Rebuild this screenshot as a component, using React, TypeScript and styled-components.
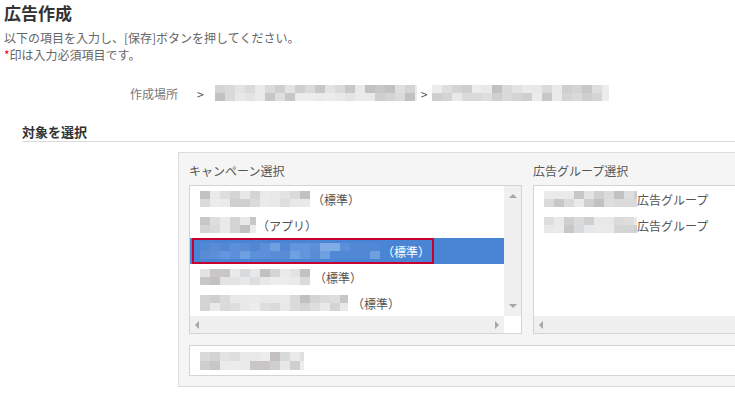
import * as React from 'react';
import styled, { createGlobalStyle } from 'styled-components';

const GlobalStyle = createGlobalStyle`
  html, body {
    margin: 0;
    padding: 0;
    overflow: hidden;
    background: #fff;
  }
  body {
    font-family: "Noto Sans CJK JP", "Noto Sans", "Liberation Sans", sans-serif;
    font-size: 12px;
    color: #555;
  }
`;

const GRAYS = ['#e9e9e9', '#dedede', '#d4d4d4', '#eaeaea', '#e3e3e3', '#cfcfcf', '#ececec', '#dadada', '#c9c6c6', '#e6e8ea', '#c2c0c0', '#d8dadc'];
const BLUES = ['#5b8fd9', '#6396dc', '#5287d4', '#6e9fe0', '#5088d5', '#80abe6', '#6196dc', '#5a8cd6'];

const mosaic = (width: number, seed: number, palette: string[]) => {
  let s = seed * 9301 + 49297;
  const next = () => {
    s = (s * 9301 + 49297) % 233280;
    return palette[Math.floor((s / 233280) * palette.length)];
  };
  const row = () => {
    const stops: string[] = [];
    for (let x = 0; x < width; x += 10) {
      const c = next();
      stops.push(`${c} ${x}px ${Math.min(x + 10, width)}px`);
    }
    return `linear-gradient(to right, ${stops.join(', ')})`;
  };
  return `${row()} top / 100% 50% no-repeat, ${row()} bottom / 100% 50% no-repeat`;
};

const Page = styled.div`
  padding: 1px 0 0 4px;
  width: 1000px;
`;

const Title = styled.h1`
  margin: 0;
  font-size: 17px;
  line-height: 24px;
  font-weight: bold;
  color: #333;
`;

const Note = styled.p<{ $first?: boolean }>`
  margin: ${({ $first }) => ($first ? '4px' : '0')} 0 0;
  line-height: 17px;
  color: #666;
`;

const Req = styled.span`
  color: #e60012;
`;

const Breadcrumb = styled.div`
  margin: 20px 0 0 126px;
  height: 20px;
  display: flex;
  align-items: center;
  color: #777;
`;

const CrumbLabel = styled.span`
  margin-right: 19px;
`;

const Sep = styled.span<{ $tight?: boolean }>`
  margin: 0 ${({ $tight }) => ($tight ? '5px' : '11px')} 0 ${({ $tight }) => ($tight ? '4px' : '0')};
  color: #555;
`;

const Mosaic = styled.span<{ $w: number; $h: number }>`
  display: inline-block;
  flex: none;
  width: ${({ $w }) => $w}px;
  height: ${({ $h }) => $h}px;
`;

const SectionHead = styled.h2`
  margin: 20px 0 0 18px;
  font-size: 13px;
  line-height: 18px;
  font-weight: bold;
  color: #333;
  border-bottom: 1px solid #d9d9d9;
`;

const Panel = styled.section`
  margin: 10px 0 0 174px;
  width: 700px;
  padding: 8px 0 10px 10px;
  background: #f5f5f5;
  border: 1px solid #dcdcdc;
`;

const Columns = styled.div`
  display: flex;
  gap: 11px;
`;

const Column = styled.div<{ $w: number }>`
  width: ${({ $w }) => $w}px;
  flex: none;
`;

const ColLabel = styled.div`
  line-height: 20px;
  margin-bottom: 4px;
  color: #555;
`;

const ListBox = styled.div<{ $vscroll?: boolean }>`
  display: grid;
  grid-template-columns: 1fr ${({ $vscroll }) => ($vscroll ? '17px' : '')};
  grid-template-rows: 130px 17px;
  background: #fff;
  border: 1px solid #d4d4d4;
`;

const Rows = styled.div`
  overflow: hidden;
`;

const Row = styled.div<{ $selected?: boolean }>`
  height: 26px;
  padding-left: 2px;
  display: flex;
  align-items: stretch;
  background: ${({ $selected }) => ($selected ? '#4a85d5' : 'transparent')};
  color: ${({ $selected }) => ($selected ? '#fff' : '#555')};
  white-space: nowrap;
`;

const Item = styled.span<{ $focus?: boolean }>`
  display: inline-flex;
  align-items: center;
  padding: 0 2px 0 6px;
  border: 2px solid ${({ $focus }) => ($focus ? '#c8002f' : 'transparent')};
`;

const Suffix = styled.span<{ $gap?: number }>`
  margin-left: ${({ $gap }) => $gap ?? 2}px;
`;

const VScroll = styled.div`
  background: #f0f0f0;
  display: flex;
  flex-direction: column;
  justify-content: space-between;
  align-items: center;
  padding: 8px 0;
`;

const HScroll = styled.div`
  background: #f0f0f0;
  display: flex;
  justify-content: space-between;
  align-items: center;
  padding: 0 5px 0 5px;
`;

const Corner = styled.div`
  background: #fff;
`;

const Arrow = styled.span<{ $dir: 'up' | 'down' | 'left' | 'right' }>`
  width: 0;
  height: 0;
  border-style: solid;
  border-color: transparent;
  ${({ $dir }) =>
    $dir === 'up'
      ? 'border-width: 0 4px 4px 4px; border-bottom-color: #a6a6a6;'
      : $dir === 'down'
      ? 'border-width: 4px 4px 0 4px; border-top-color: #a6a6a6;'
      : $dir === 'left'
      ? 'border-width: 4px 4px 4px 0; border-right-color: #a6a6a6;'
      : 'border-width: 4px 0 4px 4px; border-left-color: #a6a6a6;'}
`;

const InputBox = styled.div`
  margin-top: 11px;
  height: 29px;
  background: #fff;
  border: 1px solid #d4d4d4;
  display: flex;
  align-items: center;
  padding-left: 10px;
`;

type Campaign = { w: number; suffix: string; gap?: number; selected?: boolean };

const campaigns: Campaign[] = [
  { w: 110, suffix: '（標準）' },
  { w: 56, suffix: '（アプリ）', gap: 1 },
  { w: 180, suffix: '（標準）', selected: true },
  { w: 110, suffix: '（標準）', gap: 4 },
  { w: 148, suffix: '（標準）', gap: 4 },
];

const groups = [{ w: 93 }, { w: 93 }];

const App = () => (
  <>
    <GlobalStyle />
    <Page>
      <Title>広告作成</Title>
      <Note $first>以下の項目を入力し、[保存]ボタンを押してください。</Note>
      <Note>
        <Req>*</Req>印は入力必須項目です。
      </Note>

      <Breadcrumb>
        <CrumbLabel>作成場所</CrumbLabel>
        <Sep>&gt;</Sep>
        <Mosaic $w={202} $h={16} style={{ background: mosaic(202, 3, GRAYS) }} />
        <Sep $tight>&gt;</Sep>
        <Mosaic $w={177} $h={16} style={{ background: mosaic(177, 7, GRAYS) }} />
      </Breadcrumb>

      <SectionHead>対象を選択</SectionHead>

      <Panel>
        <Columns>
          <Column $w={333}>
            <ColLabel>キャンペーン選択</ColLabel>
            <ListBox $vscroll>
              <Rows>
                {campaigns.map((c, i) => (
                  <Row key={i} $selected={c.selected}>
                    <Item $focus={c.selected}>
                      <Mosaic
                        $w={c.w}
                        $h={16}
                        style={{ background: mosaic(c.w, i + 11, c.selected ? BLUES : GRAYS) }}
                      />
                      <Suffix $gap={c.gap}>{c.suffix}</Suffix>
                    </Item>
                  </Row>
                ))}
              </Rows>
              <VScroll>
                <Arrow $dir="up" />
                <Arrow $dir="down" />
              </VScroll>
              <HScroll>
                <Arrow $dir="left" />
                <Arrow $dir="right" />
              </HScroll>
              <Corner />
            </ListBox>
          </Column>

          <Column $w={330}>
            <ColLabel>広告グループ選択</ColLabel>
            <ListBox>
              <Rows>
                {groups.map((g, i) => (
                  <Row key={i}>
                    <Item>
                      <Mosaic $w={g.w} $h={16} style={{ background: mosaic(g.w, i + 21, GRAYS) }} />
                      <Suffix $gap={0}>広告グループ</Suffix>
                    </Item>
                  </Row>
                ))}
              </Rows>
              <HScroll>
                <Arrow $dir="left" />
              </HScroll>
            </ListBox>
          </Column>
        </Columns>

        <InputBox>
          <Mosaic $w={104} $h={18} style={{ background: mosaic(104, 31, GRAYS) }} />
        </InputBox>
      </Panel>
    </Page>
  </>
);

export default App;
